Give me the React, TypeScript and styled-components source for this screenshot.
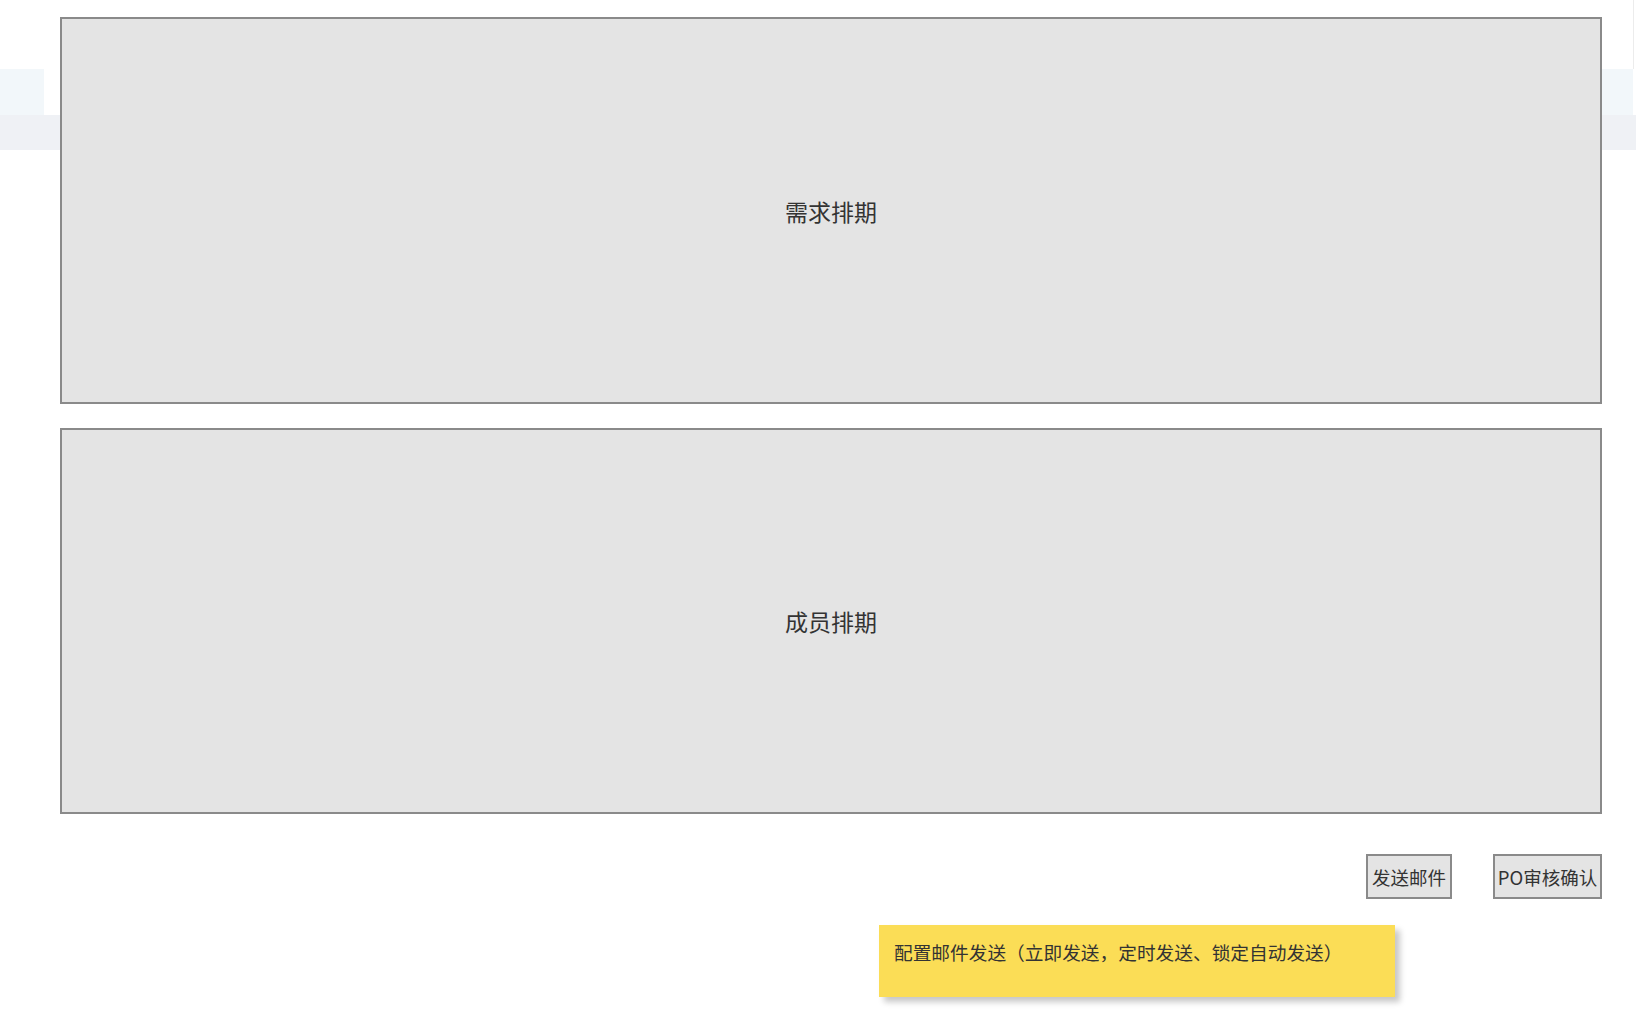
import React from "react";
import styled, { createGlobalStyle } from "styled-components";

const GlobalStyle = createGlobalStyle`
  body {
    margin: 0;
    background: #fff;
    font-family: "Noto Sans CJK SC", "Noto Sans", "Liberation Sans", sans-serif;
    color: #333;
  }
`;

const Page = styled.div`
  position: relative;
  width: 1636px;
  height: 1028px;
  overflow: hidden;
`;

// faded page chrome behind the wireframe panels
const Backdrop = styled.div`
  position: absolute;
  top: 0;
  left: 0;
  width: 100%;
  display: flex;
  flex-direction: column;
  z-index: 0;
`;

const BackdropTop = styled.div`
  height: 69px;
  display: flex;
  justify-content: flex-end;
`;

const EdgeLine = styled.div`
  width: 34px;
  border-right: 1px solid #ececec;
  margin-right: 2px;
`;

const BackdropRow = styled.div`
  height: 46px;
  display: flex;
  justify-content: space-between;
`;

const Tab = styled.div<{ $w: number }>`
  width: ${(p) => p.$w}px;
  background: #f2f7fa;
  margin-right: ${(p) => (p.$w < 40 ? 3 : 0)}px;
`;

const Band = styled.div`
  height: 35px;
  background: #eff1f5;
`;

const Content = styled.div`
  position: relative;
  z-index: 1;
  width: 1542px;
  margin-left: 60px;
  padding-top: 17px;
  display: flex;
  flex-direction: column;
`;

const Panel = styled.div<{ $h: number }>`
  height: ${(p) => p.$h}px;
  box-sizing: border-box;
  border: 2px solid #8a8a8a;
  background: #e4e4e4;
  display: flex;
  align-items: center;
  justify-content: center;
  font-size: 23px;
  color: #333;
  margin-bottom: 24px;
`;

const ButtonRow = styled.div`
  display: flex;
  justify-content: flex-end;
  gap: 41px;
  margin-top: 16px;
`;

const Button = styled.button<{ $w: number }>`
  width: ${(p) => p.$w}px;
  height: 45px;
  box-sizing: border-box;
  border: 2px solid #8a8a8a;
  background: #e4e4e4;
  font-family: "Noto Sans CJK SC", "Liberation Sans", sans-serif;
  font-size: 18.5px;
  color: #333;
  padding: 0;
  display: flex;
  align-items: center;
  justify-content: center;
  cursor: pointer;
`;

const NoteRow = styled.div`
  margin-top: 26px;
  padding-left: 819px;
`;

const StickyNote = styled.div`
  width: 516px;
  height: 72px;
  box-sizing: border-box;
  background: #fbdd56;
  box-shadow: 5px 5px 6px rgba(0, 0, 0, 0.22);
  padding: 13px 15px;
  font-size: 18.7px;
  line-height: 27px;
  color: #333;
  white-space: nowrap;
`;

export default function App() {
  return (
    <Page>
      <GlobalStyle />
      <Backdrop>
        <BackdropTop>
          <EdgeLine />
        </BackdropTop>
        <BackdropRow>
          <Tab $w={44} />
          <Tab $w={31} />
        </BackdropRow>
        <Band />
      </Backdrop>
      <Content>
        <Panel $h={387}>需求排期</Panel>
        <Panel $h={386}>成员排期</Panel>
        <ButtonRow>
          <Button $w={86}>发送邮件</Button>
          <Button $w={109}>PO审核确认</Button>
        </ButtonRow>
        <NoteRow>
          <StickyNote>配置邮件发送（立即发送，定时发送、锁定自动发送）</StickyNote>
        </NoteRow>
      </Content>
    </Page>
  );
}
